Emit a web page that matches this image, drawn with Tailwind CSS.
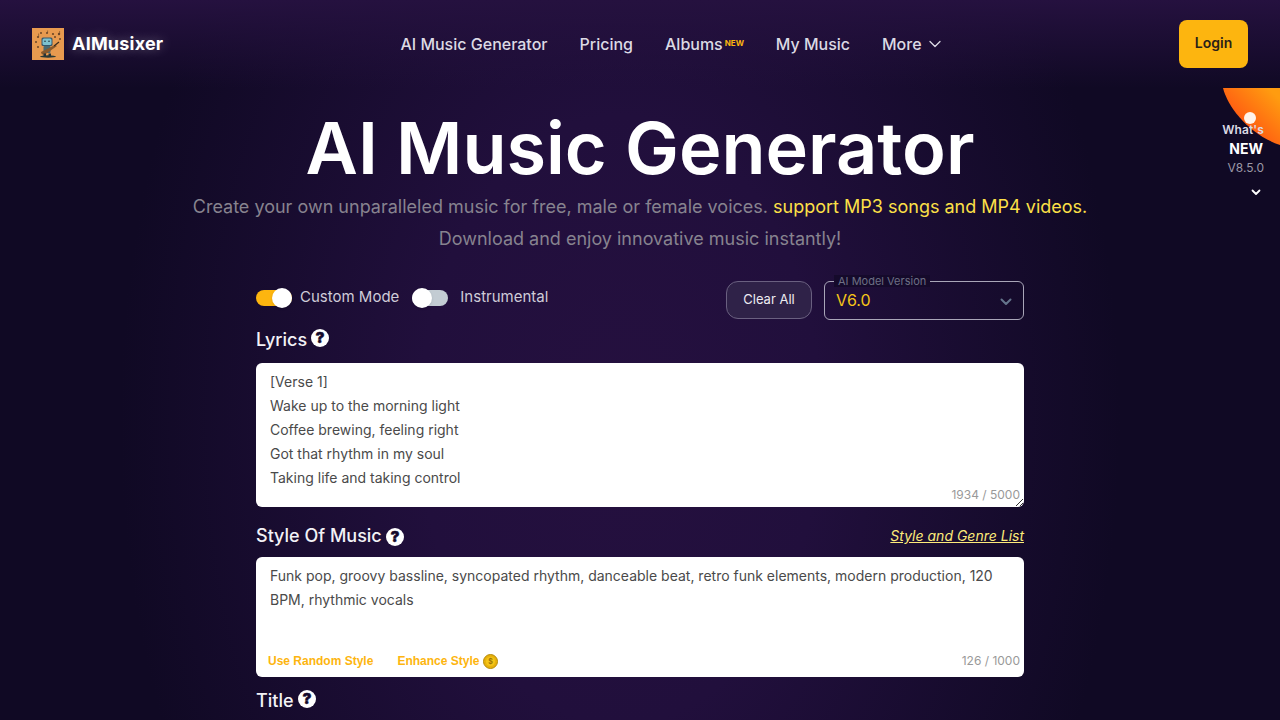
<!DOCTYPE html>
<html lang="en">
<head>
<meta charset="utf-8">
<script src="https://cdn.jsdelivr.net/npm/@tailwindcss/browser@4"></script>
</head>
<body class="m-0 h-[720px] overflow-hidden bg-[#100924] font-['Inter',sans-serif] text-white">
<div class="relative h-[720px] overflow-hidden bg-[radial-gradient(ellipse_500px_760px_at_620px_420px,#25103f_0%,#210f3c_40%,#100924_100%)]">
  <div class="relative h-[88px] px-8 flex items-center justify-between bg-gradient-to-b from-[#25113f] to-[#25113f00]">
    <div class="flex items-center gap-2 w-[130px] -mt-[1px]">
      <svg class="w-8 h-8 shrink-0" viewBox="0 0 32 32">
        <rect width="32" height="32" fill="#e89a4f"/>
        <g fill="#6b4526"><circle cx="6" cy="9" r="1.1"/><path d="M6.6 9V5.5" stroke="#6b4526" stroke-width=".6"/><circle cx="9" cy="5" r="1"/><circle cx="15" cy="5" r="1"/><path d="M15.6 5V2.5" stroke="#6b4526" stroke-width=".6"/><circle cx="21" cy="6" r="1.1"/><circle cx="27" cy="6" r="1.2"/><path d="M27.6 6V3" stroke="#6b4526" stroke-width=".6"/><circle cx="28" cy="11" r="1"/><circle cx="4" cy="14" r="1"/><circle cx="6" cy="19" r="1"/><circle cx="23" cy="9" r="1"/></g>
        <rect x="9.5" y="9.5" width="11" height="8.5" rx="1.5" fill="#36566a"/>
        <rect x="10.5" y="10.5" width="9" height="6.5" rx="1.5" fill="#7ec2cf"/>
        <circle cx="13" cy="13.3" r=".8" fill="#24343c"/><circle cx="17" cy="13.3" r=".8" fill="#24343c"/>
        <rect x="11.5" y="18" width="7" height="7" rx="1" fill="#4a6a72"/>
        <path d="M9 24 L23 17 L25 18 L13 26.5 Q9 27 9 24Z" fill="#8a5a2c"/>
        <path d="M22 18L27 14" stroke="#3a2a1c" stroke-width="1.2"/>
        <ellipse cx="16" cy="28.5" rx="8" ry="1.2" fill="#2a3a36"/>
        <rect x="11.5" y="25.5" width="2.5" height="3" fill="#26343a"/><rect x="16.5" y="25.5" width="2.5" height="3" fill="#26343a"/>
      </svg>
      <span class="text-lg font-bold leading-7 tracking-[0.2px] [text-shadow:0_0_12px_rgba(255,255,255,0.35)]">AIMusixer</span>
    </div>
    <nav class="flex items-center gap-8 text-base font-medium text-[#dcdae4]">
      <a>AI Music Generator</a>
      <a>Pricing</a>
      <a class="flex items-start">Albums<span class="w-[21px] pl-[2px] mt-[6px] text-[8px] leading-[10px] font-bold text-[#fdb50f]">NEW</span></a>
      <a>My Music</a>
      <a class="flex items-center gap-[7px]">More
        <svg class="w-3 h-3" viewBox="0 0 12 12" fill="none" stroke="#dcdae4" stroke-width="1.3" stroke-linecap="round" stroke-linejoin="round"><path d="M1 3.5l5 5 5-5"/></svg>
      </a>
    </nav>
    <button class="w-[69px] h-12 pb-[2px] rounded-lg bg-[#fdb50f] text-sm font-semibold text-[#2a2118]">Login</button>
  </div>

  <div class="absolute top-[88px] right-0 w-[58px] h-[120px]">
    <svg class="absolute top-0 left-0 w-[58px] h-[58px]" viewBox="0 0 58 58"><defs><linearGradient id="og" x1="1" y1="0" x2="0" y2="1"><stop offset="0.1" stop-color="#ff9c10"/><stop offset="0.7" stop-color="#ff5512"/></linearGradient></defs><path d="M1 0H58V57C28 47 6 20 1 0Z" fill="url(#og)"/></svg>
    <div class="absolute left-[22px] top-[24px] w-3 h-3 rounded-full bg-[#fff3ea]"></div>
    <div class="absolute right-4 top-[34px] flex flex-col items-end">
      <span class="text-xs font-semibold leading-4 tracking-[0.1px] text-[#dcdae4]">What's</span>
      <span class="text-sm font-bold leading-5 mt-[1px] mr-[1px]">NEW</span>
      <span class="text-xs leading-4 mt-[1px] text-[#9b98a6]">V8.5.0</span>
      <svg class="w-3 h-3 mt-[10px] mr-[2px]" viewBox="0 0 12 12" fill="none" stroke="#fff" stroke-width="1.8" stroke-linecap="round" stroke-linejoin="round"><path d="M2.5 4.5L6 8l3.5-3.5"/></svg>
    </div>
  </div>

  <main class="flex flex-col items-center">
    <h1 class="text-[72px] leading-[80px] font-semibold text-center mt-5">AI Music Generator</h1>
    <p class="text-lg leading-8 text-center text-[#87838f] w-[960px] mt-[3px]">Create your own unparalleled music for free, male or female voices. <span class="text-[#fde047]">support MP3 songs and MP4 videos.</span><br>Download and enjoy innovative music instantly!</p>

    <div class="w-[768px] mt-[26px]">
      <div class="flex items-start justify-between h-[39px]">
        <div class="flex items-center h-[33px] text-[#cfccd8] text-[15px]">
          <span class="relative w-9 h-4 rounded-full bg-[#fdb50f]"><span class="absolute right-0 -top-[2px] w-5 h-5 rounded-full bg-white shadow"></span></span>
          <span class="ml-2">Custom Mode</span>
          <span class="relative w-9 h-4 rounded-full bg-[#c3ccd3] ml-[13px]"><span class="absolute left-0 -top-[2px] w-5 h-5 rounded-full bg-white shadow"></span></span>
          <span class="ml-3">Instrumental</span>
        </div>
        <div class="flex items-start gap-3">
          <button class="w-[86px] h-[38px] rounded-xl bg-[#2f2248] border border-[#6a6080] text-[13px] text-[#ecebf1]">Clear All</button>
          <div class="relative w-[200px] h-[39px] rounded-md border border-[#a9a6b8] flex items-center justify-between pl-[11px] pr-[9px]">
            <span class="absolute left-[9px] -top-[7px] px-1 text-[11px] leading-3 bg-[#150a2b] text-[#6d7085]">AI Model Version</span>
            <span class="text-base leading-6 mb-[2px] text-[#f5c518]">V6.0</span>
            <svg class="w-4 h-4 mt-[1px]" viewBox="0 0 16 16" fill="none" stroke="#64748b" stroke-width="2" stroke-linecap="round" stroke-linejoin="round"><path d="M3.5 6.5L8 11l4.5-4.5"/></svg>
          </div>
        </div>
      </div>

      <div class="flex items-center gap-1 h-6 mt-2 text-lg font-medium leading-6 text-[#f3f2f6]">Lyrics
        <svg class="w-[18px] h-[18px] -mt-[4px]" viewBox="0 0 24 24"><circle cx="12" cy="12" r="12" fill="#fff"/><text x="12" y="19" text-anchor="middle" font-size="20" font-weight="900" font-family="Inter" fill="#150a2b" stroke="#150a2b" stroke-width=".6">?</text></svg>
      </div>

      <div class="relative mt-[11px] h-[144px] rounded-md bg-white px-[14px] pt-[7px] text-sm leading-6 text-[#4a4a4a]">
        [Verse 1]<br>Wake up to the morning light<br>Coffee brewing, feeling right<br>Got that rhythm in my soul<br>Taking life and taking control
        <span class="absolute right-1 bottom-1 text-xs leading-4 text-[#999]">1934 / 5000</span>
        <svg class="absolute right-0 bottom-0 w-2.5 h-2.5" viewBox="0 0 10 10" stroke="#333" stroke-width="1"><path d="M2 9L9 2M6 9L9 6"/></svg>
      </div>

      <div class="flex items-center justify-between h-6 mt-[17px]">
        <div class="flex items-center gap-1 text-lg font-medium leading-6 text-[#f3f2f6]">Style Of Music
          <svg class="w-[18px] h-[18px] mt-[2px]" viewBox="0 0 24 24"><circle cx="12" cy="12" r="12" fill="#fff"/><text x="12" y="19" text-anchor="middle" font-size="20" font-weight="900" font-family="Inter" fill="#150a2b" stroke="#150a2b" stroke-width=".6">?</text></svg>
        </div>
        <a class="text-sm italic underline text-[#fdeb7a]">Style and Genre List</a>
      </div>

      <div class="relative mt-[9px] h-[120px] rounded-md bg-white px-[14px] pt-[7px] text-sm leading-6 text-[#4a4a4a]">
        Funk pop, groovy bassline, syncopated rhythm, danceable beat, retro funk elements, modern production, 120 BPM, rhythmic vocals
        <div class="absolute left-3 bottom-[8px] flex items-center gap-6 text-xs leading-4 font-bold font-['Liberation_Sans',sans-serif] text-[#fdb50f]">
          <span>Use Random Style</span>
          <span class="flex items-center gap-1">Enhance Style
            <svg class="w-[15px] h-[15px]" viewBox="0 0 15 15"><circle cx="7.5" cy="7.5" r="7" fill="#e8b10c" stroke="#b58a08"/><circle cx="7.5" cy="7.5" r="4.6" fill="#f5c518"/><text x="7.5" y="10" text-anchor="middle" font-size="7" font-weight="700" fill="#9a7406" font-family="Inter">$</text></svg>
          </span>
        </div>
        <span class="absolute right-1 bottom-2 text-xs leading-4 text-[#999]">126 / 1000</span>
      </div>

      <div class="flex items-center gap-1 h-6 mt-3 text-lg font-medium leading-6 text-[#f3f2f6]">Title
        <svg class="w-[18px] h-[18px] -mt-[4px]" viewBox="0 0 24 24"><circle cx="12" cy="12" r="12" fill="#fff"/><text x="12" y="19" text-anchor="middle" font-size="20" font-weight="900" font-family="Inter" fill="#150a2b" stroke="#150a2b" stroke-width=".6">?</text></svg>
      </div>
    </div>
  </main>
</div>
</body>
</html>
